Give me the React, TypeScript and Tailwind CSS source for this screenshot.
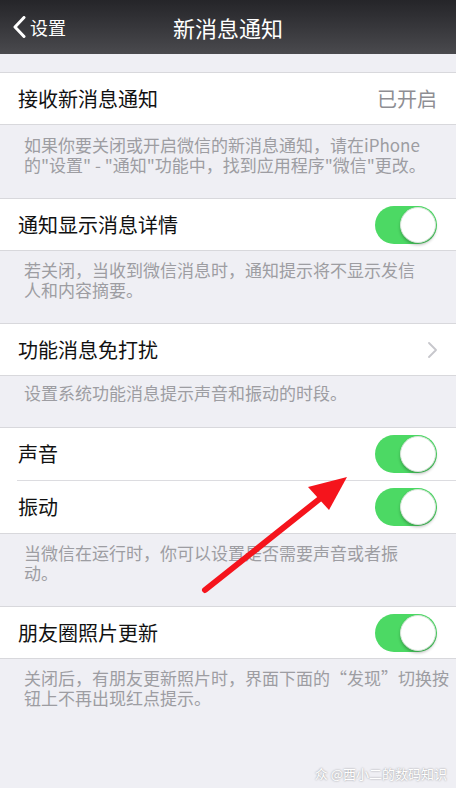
import React from "react";

const FONT = { fontFamily: '"Noto Sans CJK SC", "Noto Sans", sans-serif' };

function Toggle() {
  return (
    <div className="relative w-[62px] h-[38px] rounded-full bg-[#4cd964] shrink-0">
      <div className="absolute right-[1px] top-[1px] w-[36px] h-[36px] rounded-full bg-white border border-[#d6e4d8] shadow-[0_2px_3px_rgba(0,0,0,0.25)]" />
    </div>
  );
}

function Row({ label, right, border = "y" }: { label: string; right?: React.ReactNode; border?: "y" | "t" | "b" | "none" }) {
  const b =
    border === "y"
      ? "border-y border-[#d8d8dc]"
      : border === "t"
      ? "border-t border-[#d8d8dc]"
      : border === "b"
      ? "border-b border-[#d8d8dc]"
      : "";
  return (
    <div className={`h-[53px] bg-white flex items-center justify-between pl-[18px] pr-[19px] ${b}`}>
      <span className="text-[20px] text-[#111] leading-none">{label}</span>
      {right}
    </div>
  );
}

function Footer({ lines, h, pt = "pt-[9px]" }: { lines: string[]; h: string; pt?: string }) {
  return (
    <div className={`${h} ${pt} pl-[24px] text-[17px] leading-[20px] text-[#9d9da2] whitespace-nowrap`}>
      {lines.map((l, i) => (
        <div key={i}>{l}</div>
      ))}
    </div>
  );
}

export default function App() {
  return (
    <div className="relative w-[456px] h-[788px] bg-[#efeff4] overflow-hidden" style={FONT}>
      {/* Nav bar */}
      <div className="h-[54px] bg-gradient-to-b from-[#252529] to-[#4a4a4e] flex items-center relative">
        <div className="flex items-center pl-[12px] text-white">
          <svg width="14" height="22" viewBox="0 0 14 22" className="mr-[4px]">
            <path d="M12 1.5 L3 11 L12 20.5" fill="none" stroke="white" strokeWidth="3" strokeLinecap="round" strokeLinejoin="round" />
          </svg>
          <span className="text-[18px] leading-none">设置</span>
        </div>
        <div className="absolute inset-0 flex items-center justify-center pointer-events-none">
          <span className="text-[22px] text-white leading-none">新消息通知</span>
        </div>
      </div>

      <div className="h-[18px]" />

      <Row label="接收新消息通知" right={<span className="text-[20px] text-[#8e8e93] leading-none">已开启</span>} />
      <Footer
        h="h-[73px]"
        pt="pt-[10px]"
        lines={["如果你要关闭或开启微信的新消息通知，请在iPhone", "的\"设置\" - \"通知\"功能中，找到应用程序\"微信\"更改。"]}
      />

      <Row label="通知显示消息详情" right={<Toggle />} />
      <Footer h="h-[72px]" lines={["若关闭，当收到微信消息时，通知提示将不显示发信", "人和内容摘要。"]} />

      <Row
        label="功能消息免打扰"
        right={
          <svg width="9" height="16" viewBox="0 0 9 16">
            <path d="M1 1 L8 8 L1 15" fill="none" stroke="#c7c7cc" strokeWidth="1.8" strokeLinecap="round" strokeLinejoin="round" />
          </svg>
        }
      />
      <Footer h="h-[51px]" pt="pt-[7px]" lines={["设置系统功能消息提示声音和振动的时段。"]} />

      <div className="bg-white">
        <Row label="声音" right={<Toggle />} border="t" />
        <div className="ml-[17px] h-px bg-[#dcdce0]" />
        <Row label="振动" right={<Toggle />} border="b" />
      </div>
      <Footer h="h-[72px]" lines={["当微信在运行时，你可以设置是否需要声音或者振", "动。"]} />

      <Row label="朋友圈照片更新" right={<Toggle />} />
      <Footer h="h-[80px]" lines={["关闭后，有朋友更新照片时，界面下面的“发现”切换按", "钮上不再出现红点提示。"]} />

      {/* Watermark */}
      <div className="absolute right-[9px] bottom-[8px] flex items-center gap-[3px] text-[13px] leading-none text-white [text-shadow:0_0_2px_rgba(0,0,0,0.45)]">
        <span>众</span>
        <span>@西小二的数码知识</span>
      </div>

      {/* Red arrow annotation */}
      <svg className="absolute inset-0 pointer-events-none" width="456" height="788" viewBox="0 0 456 788">
        <line x1="205" y1="590" x2="322" y2="497" stroke="#f5141c" strokeWidth="6" strokeLinecap="round" />
        <polygon points="347,477 308,487 329,510" fill="#f5141c" />
      </svg>
    </div>
  );
}
